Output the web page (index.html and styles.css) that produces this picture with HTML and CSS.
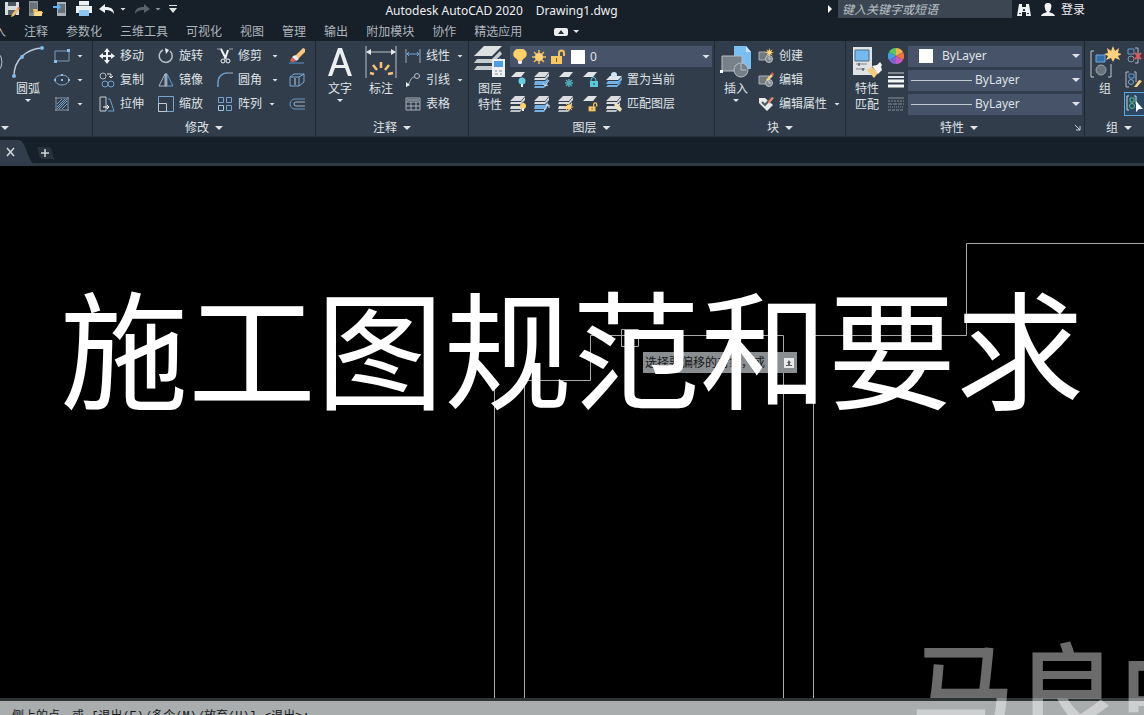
FILE: index.html
```html
<!DOCTYPE html>
<html lang="zh-CN">
<head>
<meta charset="utf-8">
<title>Autodesk AutoCAD 2020 - Drawing1.dwg</title>
<link rel="stylesheet" href="styles.css">
</head>
<body>
<svg class="defs" aria-hidden="true">
  <symbol id="stack" viewBox="0 0 16 16"><path d="M5 0h10l-4 5H0zM1 6h10l4-5v3l-4 4H0zM1 10h10l3-4v3l-3 4H0z" fill="#d9dddf"/><path d="M1 14h9l3-3v1l-3 4H0z" fill="#b9c0c4"/></symbol>
  <symbol id="stackblue" viewBox="0 0 16 16"><path d="M5 0h10l-4 5H0zM1 6h10l4-5v3l-4 4H0z" fill="#d9dddf"/><path d="M1 9h10l3-3v3l-3 4H0zM1 14h9l3-3v1l-3 4H0z" fill="#75afe0"/></symbol>
  <symbol id="bulb" viewBox="0 0 16 16"><path d="M8 0a5 5 0 0 0-3 10l1 2h4l1-2a5 5 0 0 0-3-10z" fill="#ffd166"/><path d="M6 12h4v2l-1 1H7l-1-1z" fill="#e8eaec"/></symbol>
  <symbol id="sun" viewBox="0 0 16 16"><g stroke="#f4bd55" stroke-width="1.5"><path d="M8 1v14M1 8h14M3 3l10 10M13 3L3 13"/></g><circle cx="8" cy="8" r="4" fill="#ffd477"/></symbol>
  <symbol id="unlock" viewBox="0 0 16 16"><path d="M9 7V4a2.500 2.500 0 0 1 5 0v3" fill="none" stroke="#f4c15b" stroke-width="2"/><path d="M1 7h11v8H1z" fill="#f9c75f"/><path d="M6 9h1v4H6z" fill="#7a5a1e"/></symbol>
  <symbol id="block" viewBox="0 0 16 16"><path d="M1 4h10v8H1z" fill="#707880" stroke="#aab2b8"/><circle cx="11" cy="11" r="3.500" fill="#808890" stroke="#bcc3c8"/><path d="M11 9v2h2" stroke="#ccd" fill="none"/></symbol>
</svg>

<header class="titlebar">
  <nav class="quick" aria-label="快速访问">
    <button aria-label="保存"><svg class="i16" viewBox="0 0 16 16"><path d="M1 1h14v13H1z" fill="#d8dcde"/><path d="M4 1h8v4H4z" fill="#4a5560"/><path d="M4 9h8v5H4z" fill="#59636c"/><path d="M8 13l5-6 2 2-5 6-3 1z" fill="#efbd6c"/><path d="M13 7l2 2 1-2-1-1z" fill="#e56b55"/></svg></button>
    <button aria-label="打开"><svg class="i16" viewBox="0 0 16 16"><path d="M1 0h9v15H1z" fill="#858d93"/><path d="M2 2h7v10H2z" fill="#68727a"/><path d="M5 8h4l1 2h4v5H6z" fill="#f0bf61"/><path d="M7 11h8l-2 4H6z" fill="#ffd98a"/></svg></button>
    <button aria-label="导入"><svg class="i16" viewBox="0 0 16 16"><path d="M5 1h9v14H5z" fill="#aab1b7"/><path d="M6 3h7v9H6z" fill="#67727d"/><path d="M1 5h4V2l4 4-4 4V7H1z" fill="#62b4f0"/></svg></button>
    <button aria-label="打印"><svg class="i16" viewBox="0 0 16 16"><path d="M3 0h10v5H3zM0 5h16v7H0z" fill="#edf0f1"/><path d="M3 4h10v1H3z" fill="#7d858c"/><path d="M3 9h10v6H3z" fill="#8cc6f2"/></svg></button>
    <button aria-label="放弃" class="undo"><svg class="i16" viewBox="0 0 16 16"><path d="M0 8l6-5v3c5 0 9 1 9 7-2-3-4-4-9-4v3z" fill="#f0f2f3"/></svg><i class="caret"></i></button>
    <button aria-label="重做" class="redo"><svg class="i16" viewBox="0 0 16 16"><path d="M16 8l-6-5v3C5 6 1 7 1 13c2-3 4-4 9-4v3z" fill="#56616b"/></svg><i class="caret dim"></i></button>
    <button aria-label="自定义"><svg class="i8" viewBox="0 0 8 8"><path d="M0 0h8v1H0zM0 3h8L4 8z" fill="#dfe3e6"/></svg></button>
  </nav>
  <h1 class="apptitle"><span>Autodesk AutoCAD 2020</span><span>Drawing1.dwg</span></h1>
  <div class="account">
    <svg class="i8" viewBox="0 0 8 8"><path d="M2 0l4 4-4 4z" fill="#fff"/></svg>
    <input type="search" aria-label="搜索" placeholder="键入关键字或短语">
    <button aria-label="查找"><svg class="i16" viewBox="0 0 16 16"><path d="M3 2h3v3h4V2h3l2 12h-5v-4H6v4H1z" fill="#eef0f1"/><path d="M7 7h2v2H7zM3 11h2v1H3zM11 11h2v1h-2z" fill="#26323c"/></svg></button>
    <button class="login"><svg class="i16" viewBox="0 0 16 16"><path d="M8 1c-3 0-4 2-3 5 0 2 1 3 2 4-2 1-5 1-6 4h14c-1-3-4-3-6-4 1-1 2-2 2-4 1-3 0-5-3-5z" fill="#f0f2f3"/></svg>登录</button>
  </div>
</header>

<nav class="tabs" aria-label="功能区选项卡">
  <button class="cut">插入</button><button>注释</button><button>参数化</button><button>三维工具</button><button>可视化</button><button>视图</button><button>管理</button><button>输出</button><button>附加模块</button><button>协作</button><button>精选应用</button>
  <button class="minimize" aria-label="最小化功能区"><svg class="cam" viewBox="0 0 14 8"><rect width="14" height="8" rx="2" fill="#eceeef"/><path d="M7 2l3 4H4z" fill="#26323c"/></svg><i class="caret"></i></button>
</nav>

<main class="ribbon">
  <section class="panel draw">
    <div class="body">
      <button class="edge" aria-label="圆"><svg class="sliver" viewBox="0 0 4 32"><circle cx="-11" cy="18" r="13" fill="none" stroke="#b9c3cc"/></svg></button>
      <button class="big"><svg class="i32" viewBox="0 0 32 32"><path d="M2 30C2 14 14 3 30 2" fill="none" stroke="#b9c8d6" stroke-width="1.500"/><g fill="#7db8ea"><circle cx="2" cy="30" r="2"/><circle cx="10" cy="11" r="2"/><circle cx="30" cy="2" r="2"/></g></svg><span>圆弧</span><i class="caret"></i></button>
      <div class="col">
        <button aria-label="矩形"><svg class="i16" viewBox="0 0 16 16"><path d="M1 3h14v10H1z" fill="none" stroke="#7b9cbd"/><path d="M0 12h3v3H0zM13 1h3v3h-3z" fill="#8ebce4"/></svg><i class="caret"></i></button>
        <button aria-label="椭圆"><svg class="i16" viewBox="0 0 16 16"><ellipse cx="8" cy="8" rx="7" ry="5" fill="none" stroke="#86a9c8"/><path d="M7 7h2v2H7zM0 7h2v2H0zM14 7h2v2h-2zM7 2h2v2H7z" fill="#8ebce4"/></svg><i class="caret"></i></button>
        <button aria-label="图案填充"><svg class="i16" viewBox="0 0 16 16"><path d="M1 2h14M1 14h14M2 1v14M14 1v14" stroke="#8996a3"/><path d="M3 8l5-5M3 13L13 3M8 13l5-5M3 11l8-8M5 13l8-8" stroke="#72a2cc"/></svg><i class="caret"></i></button>
      </div>
    </div>
    <h2><i class="caret wide"></i></h2>
  </section>

  <section class="panel modify">
    <div class="body">
      <div class="col">
        <button><svg class="i16" viewBox="0 0 16 16"><path d="M8 0l3 4H9v3h3V5l4 3-4 3V9H9v3h2l-3 4-3-4h2V9H4v2L0 8l4-3v2h3V4H5z" fill="#f0f2f3"/></svg>移动</button>
        <button><svg class="i16" viewBox="0 0 16 16" fill="none"><circle cx="4" cy="4" r="3" stroke="#aeb8c0"/><path d="M8 2h4v3m-2-1l2 2 2-2" stroke="#e6e9eb"/><circle cx="6" cy="12" r="3" stroke="#6d9fc9"/><circle cx="12" cy="12" r="3" stroke="#6d9fc9"/></svg>复制</button>
        <button><svg class="i16" viewBox="0 0 16 16" fill="none"><path d="M1 1h6v14H1z" stroke="#c3cbd1"/><path d="M9 3h2l4 12H9" stroke="#6d9fc9"/><path d="M4 11h6m-2-2l2 2-2 2" stroke="#fff"/></svg>拉伸</button>
      </div>
      <div class="col">
        <button><svg class="i16" viewBox="0 0 16 16"><path d="M5 2a6.500 6.500 0 1 0 7 1" fill="none" stroke="#b8c1c8" stroke-width="1.500"/><path d="M7 0l4 2-3 4z" fill="#eef0f1"/></svg>旋转</button>
        <button><svg class="i16" viewBox="0 0 16 16" fill="none"><path d="M7 2v12H1z" stroke="#a9b7c3"/><path d="M9 2v12h6z" stroke="#62a0d6"/><path d="M8 1v14" stroke="#d8dde0"/></svg>镜像</button>
        <button><svg class="i16" viewBox="0 0 16 16" fill="none"><path d="M.5.5h15v15H.5z" stroke="#77a5cd"/><path d="M.5 7.500h8v8h-8z" stroke="#c1c9cf"/></svg>缩放</button>
      </div>
      <div class="col third">
        <button><svg class="i16" viewBox="0 0 16 16" fill="none"><path d="M0 1h5M12 1h4" stroke="#9aa5ae"/><path d="M4 1l5 10M11 2L8 11" stroke="#f2f4f5" stroke-width="2"/><circle cx="6" cy="13" r="2" stroke="#f2f4f5"/><circle cx="11" cy="13" r="2" stroke="#f2f4f5"/></svg>修剪<i class="caret"></i></button>
        <button><svg class="i16" viewBox="0 0 16 16" fill="none"><path d="M1 15V10C1 5 5 1 10 1" stroke="#6b9fcb" stroke-width="1.500"/><path d="M10 1h6" stroke="#a8b2ba"/></svg>圆角<i class="caret"></i></button>
        <button class="near"><svg class="i16" viewBox="0 0 16 16" fill="none"><path d="M1.500 1.500h5v5h-5zM9.500 1.500h5v5h-5zM9.500 9.500h5v5h-5z" stroke="#71a5d2"/><path d="M1.500 9.500h5v5h-5z" stroke="#a9c6df"/></svg>阵列<i class="caret"></i></button>
      </div>
      <div class="col">
        <button aria-label="删除"><svg class="i16" viewBox="0 0 16 16"><path d="M0 15h15" stroke="#5699d1"/><path d="M6 8l8-8 2 1v3l-7 7z" fill="#fac77b"/><path d="M6 7l4 4-3 2-4-4z" fill="#eef1f3"/><path d="M3 9l4 4-3 1-3-1z" fill="#e8604f"/></svg></button>
        <button aria-label="分解"><svg class="i16" viewBox="0 0 16 16" fill="none" stroke="#79aad3"><path d="M1 5h9v9H1zM1 5l4-3h10v8l-5 4M10 5l5-3"/><path d="M6 6v7" stroke="#c0d4e4"/></svg></button>
        <button aria-label="偏移"><svg class="i16" viewBox="0 0 16 16" fill="none"><path d="M16 3H6a5 5 0 0 0 0 10h10" stroke="#6797c2"/><path d="M16 6H7a2 2 0 0 0 0 4h9" stroke="#a4b4c2"/></svg></button>
      </div>
    </div>
    <h2>修改<i class="caret wide"></i></h2>
  </section>

  <section class="panel annotate">
    <div class="body">
      <button class="big"><svg class="i32" viewBox="0 0 32 32"><path d="M4 30L14 2h4l10 28h-4l-3-8H11l-3 8zM12 19h8L16 7z" fill="#eceff0"/></svg><span>文字</span><i class="caret"></i></button>
      <button class="big"><svg class="i32" viewBox="0 0 32 32"><path d="M1 0v32M31 0v32M2 6h28" stroke="#b8c2ca"/><path d="M1 6l5-3v6zM31 6l-5-3v6z" fill="#e6eaec"/><g stroke="#f6c473" stroke-width="2.500"><path d="M5 27l4 1M8 19l4 5M16 16v6M24 19l-4 5M28 27l-5 1"/></g></svg><span>标注</span></button>
      <div class="col">
        <button><svg class="i16" viewBox="0 0 16 16" fill="none"><path d="M1 1v14M15 1v14" stroke="#9da9b3"/><path d="M2 6h12M4 4L2 6l2 2M12 4l2 2-2 2" stroke="#6aa9df"/></svg>线性<i class="caret"></i></button>
        <button><svg class="i16" viewBox="0 0 16 16" fill="none"><circle cx="12" cy="4" r="2.500" stroke="#b3bec7"/><path d="M10 5c-4 0-4 3-7 8" stroke="#b3bec7"/><path d="M1 15V10l4 3z" fill="#eef1f2"/></svg>引线<i class="caret"></i></button>
        <button><svg class="i16" viewBox="0 0 16 16" fill="none"><path d="M1 2h14v12H1zM1 6h14M1 10h14M6 6v8M11 6v8" stroke="#a5b0b9"/><path d="M2 4h12" stroke="#78838d" stroke-width="2"/></svg>表格</button>
      </div>
    </div>
    <h2>注释<i class="caret wide"></i></h2>
  </section>

  <section class="panel layers">
    <div class="body">
      <button class="big"><svg class="i32" viewBox="0 0 32 32"><path d="M10 0h18L18 10H0z" fill="#dde1e2"/><path d="M3 13h15l8-8 2 3-9 9H0zM3 20h15l8-8 2 3-9 9H0z" fill="#c6cccf"/><path d="M18 13h13v18H18z" fill="#eef1f2"/><path d="M20 15h9v6h-9z" fill="#4b9fe5"/><path d="M21 25h2m2 0h3m-7 3h3m2 0h2" stroke="#798795"/></svg><span>图层</span><span>特性</span></button>
      <div class="layerarea">
        <div class="combo"><svg class="i16"><use href="#bulb"/></svg><svg class="i16"><use href="#sun"/></svg><svg class="i16"><use href="#unlock"/></svg><i class="swatch"></i><select aria-label="图层"><option>0</option></select><i class="caret wide"></i></div>
        <div class="tools">
          <button aria-label="关闭图层"><svg class="i16" viewBox="0 0 16 16"><path d="M6 0h9l-4 5H1z" fill="#dfe3e5"/><circle cx="12" cy="9" r="3.500" fill="#63d2de"/><path d="M11 12h2v3h-2z" fill="#dff"/></svg></button>
          <button aria-label="隔离图层"><svg class="i16" viewBox="0 0 16 16"><use href="#stackblue"/><path d="M15 8l-4 6M9 11l2 3 3-1" stroke="#b9dcf7" fill="none"/></svg></button>
          <button aria-label="冻结图层"><svg class="i16" viewBox="0 0 16 16"><path d="M6 0h9l-4 5H1z" fill="#dfe3e5"/><path d="M11 7v8M7 11h8M8 8l6 6M14 8l-6 6" stroke="#50a9b8" stroke-width="1.500"/></svg></button>
          <button aria-label="锁定图层"><svg class="i16" viewBox="0 0 16 16"><path d="M6 0h9l-4 5H1z" fill="#dfe3e5"/><path d="M9 10V8a2 2 0 0 1 5 0v2" stroke="#5acbdc" fill="none"/><path d="M8 9h8v6H8z" fill="#5acbdc"/><path d="M12 11v2" stroke="#245"/></svg></button>
          <button class="wordy"><svg class="i16" viewBox="0 0 16 16"><path d="M4 4h12l-4 4H0z" fill="#e1e5e7"/><path d="M2 9h10l4-4v3l-4 4H0zM2 13h9l4-3v1l-4 4H0z" fill="#72b2e8"/><circle cx="8" cy="3" r="3" fill="#cde5f8"/></svg>置为当前</button>
          <button aria-label="打开所有图层"><svg class="i16" viewBox="0 0 16 16"><use href="#stack"/><circle cx="13" cy="10" r="3" fill="#ffd166"/><path d="M12 12h2v3h-2z" fill="#fff"/></svg></button>
          <button aria-label="取消隔离"><svg class="i16" viewBox="0 0 16 16"><use href="#stackblue"/><path d="M10 14l4-5M12 9h3v3" stroke="#d8eafa" fill="none"/></svg></button>
          <button aria-label="解冻图层"><svg class="i16" viewBox="0 0 16 16"><use href="#stack"/><svg x="6" y="6" width="10" height="10"><use href="#sun"/></svg></svg></button>
          <button aria-label="解锁图层"><svg class="i16" viewBox="0 0 16 16"><path d="M6 0h9l-4 5H1z" fill="#dfe3e5"/><svg x="6" y="6" width="10" height="10"><use href="#unlock"/></svg></svg></button>
          <button class="wordy"><svg class="i16" viewBox="0 0 16 16"><use href="#stack"/><path d="M8 7l4 1 4 5-2 3-5-5z" fill="#f1dfba"/></svg>匹配图层</button>
        </div>
      </div>
    </div>
    <h2>图层<i class="caret wide"></i></h2>
  </section>

  <section class="panel blocks">
    <div class="body">
      <button class="big"><svg class="i32" viewBox="0 0 32 32"><path d="M14 0h12l5 6v17H14z" fill="#79bff3"/><path d="M26 0v6h5z" fill="#c7e4fa"/><path d="M2 10h20v15H2z" fill="#78818a" stroke="#b6bec5"/><circle cx="21" cy="24" r="7" fill="#747e87" stroke="#b9c1c8"/><path d="M21 18v6h5" fill="none" stroke="#b9c1c8"/><path d="M0 24h3v3H0z" fill="#fff"/></svg><span>插入</span><i class="caret"></i></button>
      <div class="col">
        <button><svg class="i16" viewBox="0 0 16 16"><use href="#block"/><svg x="7" y="0" width="9" height="9"><use href="#sun"/></svg></svg>创建</button>
        <button><svg class="i16" viewBox="0 0 16 16"><use href="#block"/><path d="M8 8l5-6 2 2-5 5z" fill="#ffd080"/><path d="M13 2l1-2 2 2-1 2z" fill="#e85d4e"/></svg>编辑</button>
        <button><svg class="i16" viewBox="0 0 16 16"><path d="M1 2h6l8 7-6 6-8-8z" fill="#e8ebec"/><path d="M4 6l3 3 6-7" stroke="#4c5861" stroke-width="2" fill="none"/><path d="M10 6l4-5 2 1-5 6z" fill="#ef8a66"/></svg>编辑属性<i class="caret"></i></button>
      </div>
    </div>
    <h2>块<i class="caret wide"></i></h2>
  </section>

  <section class="panel props">
    <div class="body">
      <button class="big"><svg class="i32" viewBox="0 0 32 32"><path d="M2 1h19v28H2z" fill="#dfe3e5"/><path d="M4 4h14v11H4z" fill="#75b9f0" stroke="#4d6a82"/><path d="M5 18h11M5 23h9" stroke="#7a848d"/><path d="M8 17v3M12 22v3" stroke="#333"/><path d="M16 24l5-3 6 6-4 5z" fill="#f5cb7c"/><path d="M21 20l5-1 3-3 2 3-1 2 1 3-4 4z" fill="#f4f5f5"/></svg><span>特性</span><span>匹配</span></button>
      <div class="propgrid">
        <svg class="i16" viewBox="0 0 16 16"><path d="M8 8V0a8 8 0 0 1 7 4z" fill="#f7b04c"/><path d="M8 8l7-4a8 8 0 0 1 0 8z" fill="#f37040"/><path d="M8 8l7 4a8 8 0 0 1-7 4z" fill="#cd58c2"/><path d="M8 8v8a8 8 0 0 1-7-4z" fill="#7a64d6"/><path d="M8 8l-7 4a8 8 0 0 1 0-8z" fill="#3e9fe2"/><path d="M8 8L1 4a8 8 0 0 1 7-4z" fill="#56c765"/></svg>
        <div class="combo color"><i class="swatch"></i><select aria-label="对象颜色"><option>ByLayer</option></select><i class="caret wide"></i></div>
        <svg class="i16" viewBox="0 0 16 16"><path d="M0 1h16" stroke="#c8ced2"/><path d="M0 5h16" stroke="#e8ebec" stroke-width="2"/><path d="M0 9h16M0 14h16" stroke="#f4f5f5" stroke-width="3"/></svg>
        <div class="combo line"><i class="rule"></i><select aria-label="线宽"><option>ByLayer</option></select><i class="caret wide"></i></div>
        <svg class="i16" viewBox="0 0 16 16" stroke="#8a949d"><path d="M0 2h16"/><path d="M0 5h16" stroke-dasharray="2 1"/><path d="M0 8h16" stroke-dasharray="4 1"/><path d="M0 11h16" stroke-dasharray="1 1"/><path d="M0 14h16" stroke-dasharray="3 1"/></svg>
        <div class="combo line"><i class="rule"></i><select aria-label="线型"><option>ByLayer</option></select><i class="caret wide"></i></div>
      </div>
    </div>
    <h2>特性<i class="caret wide"></i><svg class="launch" viewBox="0 0 8 8"><path d="M1 1l5 5M6 2v4H2" stroke="#cdd4d9" fill="none"/></svg></h2>
  </section>

  <section class="panel groups">
    <div class="body">
      <button class="big"><svg class="i32" viewBox="0 0 32 32"><path d="M5 5H2v26h3M19 31h3V18" fill="none" stroke="#c0c8ce"/><path d="M7 9h9v7H7z" fill="#326fa9" stroke="#6ea9dd"/><circle cx="12" cy="24" r="5" fill="#68727b" stroke="#9ba5ad"/><path d="M24 0l2 5 4-3-1 5 4 1-4 2 2 4-5-2-2 4-2-4-5 2 2-4-4-2 4-1-1-5 4 3z" fill="#ffcf7b"/></svg><span>组</span></button>
      <div class="col">
        <button aria-label="解除编组"><svg class="i20" viewBox="0 0 20 20"><path d="M4 3h6v5H4z" fill="none" stroke="#6d9fd0"/><circle cx="7" cy="13" r="3" fill="none" stroke="#8d98a2"/><path d="M11 2h3v15h-3" fill="none" stroke="#b4bdc4"/><path d="M11 7l6 6M17 7l-6 6" stroke="#ed5555" stroke-width="2"/></svg></button>
        <button aria-label="组编辑"><svg class="i20" viewBox="0 0 20 20"><path d="M5 2H2v15h3M10 2h2v10" fill="none" stroke="#b4bdc4"/><path d="M5 4h5v4H5z" fill="none" stroke="#5f9fe0"/><circle cx="7" cy="12" r="2.500" fill="none" stroke="#6fa8d8"/><path d="M10 17l5-7 3 1-5 6z" fill="#ffd080"/></svg></button>
        <button aria-label="组选择" class="on"><svg class="i20" viewBox="0 0 20 20"><path d="M5 2H3v14h2M10 2h2v8" fill="none" stroke="#cfd6db"/><path d="M6 4h4v4H6z" fill="none" stroke="#58c58a"/><circle cx="8" cy="12" r="2.500" fill="none" stroke="#58c58a"/><path d="M12 7v11l3-3h4z" fill="#fff"/></svg></button>
      </div>
    </div>
    <h2>组<i class="caret wide"></i></h2>
  </section>
</main>

<nav class="files" aria-label="文件选项卡">
  <button class="filetab" aria-label="关闭"><svg class="tabshape" viewBox="0 0 36 26"><path d="M0 0h18c9 0 8 20 18 26H0z" fill="#323d4c"/><path d="M7 8l7 8M14 8l-7 8" stroke="#d2d7db" stroke-width="1.500"/></svg></button>
  <button class="newtab" aria-label="新图形"><svg class="plus" viewBox="0 0 20 16"><path d="M2 2h12c4 0 3 10 6 12H8C3 14 4 6 2 2z" fill="#27323d"/><path d="M10 4v8M6 8h8" stroke="#cfd4d8" stroke-width="1.500"/></svg></button>
</nav>

<div class="canvas">
  <svg class="drawing" width="1144" height="533" viewBox="0 0 1144 533" fill="none" stroke="#a9a9a9"><path d="M494.500 219V533M524.500 533V214.500H590.500V169.500H783.500V533M813.500 533V169.500H966.500V77.500H1144M621.500 163.500h17v17h-17z" stroke-width="1"/></svg>
  <div class="prompt"><span>选择要偏移的对象，或</span><svg class="key" viewBox="0 0 10 10"><path d="M0 0h10v10H0z" fill="#e9ebeb"/><path d="M5 2l2 3H6v2h2v1H2V7h2V5H3z" fill="#5b6064"/></svg></div>
  <p class="headline">施工图规范和要求</p>
</div>
<footer class="command">侧上的点，或 [退出(E)/多个(M)/放弃(U)] &lt;退出&gt;:</footer>
<div class="watermark">马良中</div>
</body>
</html>
```
FILE: styles.css
```css
* { box-sizing: border-box; }
body {
  margin: 0;
  height: 100vh;
  display: flex;
  flex-direction: column;
  position: relative;
  overflow: hidden;
  background: #000;
  color: #dfe3e6;
  font: 12px/16px "Noto Sans", "Noto Sans CJK SC", sans-serif;
}
button, input, select { font: inherit; color: inherit; border: 0; background: none; padding: 0; margin: 0; }
button { display: flex; align-items: center; white-space: nowrap; }
svg { display: block; flex: none; }
.defs { position: absolute; width: 0; height: 0; }
.i8 { width: 8px; height: 8px; }
.i16 { width: 16px; height: 16px; }
.i20 { width: 20px; height: 20px; }
.i32 { width: 32px; height: 32px; }
.caret { flex: none; width: 6px; height: 3px; background: #dfe3e6; clip-path: polygon(0 0, 100% 0, 50% 100%); }
.caret.wide { width: 8px; height: 4px; }
.caret.dim { background: #8a939b; }

.titlebar { flex: none; height: 20px; display: flex; align-items: center; justify-content: space-between; background: #172029; padding: 0 59px 0 4px; }
.quick { display: flex; align-items: center; gap: 8px; margin-top: -2px; }
.quick .undo, .quick .redo { gap: 5px; }
.quick .undo { margin-left: -1px; }
.apptitle { margin: 0; padding-top: 2px; font: inherit; color: #eef0f1; display: flex; gap: 13px; }
.account { display: flex; align-items: center; gap: 4px; height: 18px; margin-top: -2px; }
.account input { width: 174px; height: 18px; padding: 0 4px; background: #3b4652; font-style: italic; }
.account input::placeholder { color: #bcc3c9; opacity: 1; }
.account button { padding-top: 2px; }
.account .login { gap: 5px; color: #eef0f1; margin-left: 4px; }

.tabs { flex: none; height: 21px; padding-top: 2px; display: flex; align-items: center; gap: 18px; background: #172029; color: #aeb5bb; }
.tabs .cut { margin-left: -18px; }
.tabs .minimize { gap: 5px; margin-left: 14px; }
.cam { width: 14px; height: 8px; }

.ribbon { flex: none; display: flex; background: #323d4c; border-bottom: 1px solid #27313d; }
.panel { flex: none; display: flex; flex-direction: column; border-right: 1px solid #1d2731; }
.panel:last-child { flex: 1; min-width: 0; border-right: 0; overflow: hidden; }
.body { display: flex; padding-top: 3px; }
.panel h2 { margin: 0; padding-top: 4px; height: 20px; font: inherit; display: flex; align-items: center; justify-content: center; gap: 6px; position: relative; }
.big { flex-direction: column; justify-content: flex-start; padding-top: 2px; width: 34px; height: 72px; line-height: 16px; }
.big .i32 { margin-bottom: 3px; }
.big .caret { margin-top: 2px; }
.col { display: grid; grid-auto-rows: 24px; }
.col button { gap: 5px; }

.draw { width: 93px; }
.draw .body { gap: 9px; }
.sliver { width: 4px; height: 32px; }
.edge { width: 2px; align-items: flex-start; }
.draw .col button { gap: 7px; }
.draw h2 { justify-content: flex-start; padding-left: 1px; }

.modify { width: 223px; }
.modify .body { padding-left: 6px; gap: 14px; }
.modify .col.third { width: 58px; }
.modify .col.third .caret { margin-left: 5px; }
.modify .col.third .near .caret { margin-left: 2px; }

.annotate { width: 153px; }
.annotate .body { padding-left: 7px; gap: 7px; }
.annotate .col .caret { margin-left: 2px; }

.layers { width: 246px; }
.layers .body { padding-left: 4px; gap: 3px; }
.layerarea { width: 202px; padding-top: 2px; }
.tools { display: grid; grid-template-columns: repeat(4, 24px) auto; grid-auto-rows: 24px; padding-top: 1px; }
.wordy { gap: 5px; }

.combo { display: flex; align-items: center; background: #465369; height: 21px; padding: 0 2px 0 4px; min-width: 0; }
.combo select { flex: 1; min-width: 0; appearance: none; -webkit-appearance: none; height: 21px; }
.swatch { flex: none; width: 14px; height: 14px; background: #fff; }
.layers .combo { gap: 3px; padding-left: 2px; }
.layers .combo .swatch { margin: 0 2px; }

.blocks { width: 131px; }
.blocks .body { padding-left: 4px; gap: 5px; }
.blocks .col .caret { margin-left: 2px; }

.props { width: 239px; }
.props .body { padding-left: 4px; gap: 4px; }
.props h2 { padding-right: 12px; }
.propgrid { flex: 1; display: grid; grid-template-columns: 16px 1fr; grid-auto-rows: 24px; column-gap: 4px; align-items: center; padding-right: 2px; }
.combo.color { padding-left: 11px; gap: 9px; }
.combo.line { gap: 3px; padding-left: 3px; }
.rule { width: 61px; height: 1px; background: #c3cad1; flex: none; }
.launch { position: absolute; right: 2px; top: 8px; width: 8px; height: 8px; }

.groups .body { padding-left: 4px; gap: 3px; }
.groups h2 { justify-content: flex-start; padding-left: 21px; }
.groups .on { background: #2b4964; outline: 1px solid #5fa5dd; outline-offset: -1px; width: 24px; }

.files { flex: none; height: 29px; display: flex; align-items: flex-start; padding-top: 3px; background: #15202a; border-bottom: 3px solid #303a47; }
.tabshape { width: 36px; height: 26px; }
.plus { width: 20px; height: 16px; }
.newtab { margin-top: 5px; }
.filetab { margin-right: -1px; }

.canvas { flex: 1; min-height: 0; position: relative; overflow: hidden; background: #000; }
.drawing { position: absolute; left: 0; top: 0; }
.prompt { position: absolute; left: 643px; top: 186px; width: 154px; height: 21px; display: flex; align-items: center; justify-content: space-between; padding: 0 3px 0 2px; background: #8b8e90; color: #16191b; }
.key { width: 10px; height: 10px; }
.headline { position: absolute; left: 0; right: 0; top: 84px; margin: 0; text-align: center; font: 128px/190px "Noto Sans CJK SC", sans-serif; color: #fff; white-space: nowrap; }

.command { flex: none; height: 17px; overflow: hidden; padding: 8px 12px 0; border-top: 3px solid #2c3334; background: #a9adae; color: #15191b; white-space: nowrap; font-family: "Liberation Mono", "Noto Sans CJK SC", monospace; }
.watermark { position: absolute; left: 911px; top: 611px; font: 500 104px/150px "Noto Sans CJK SC", sans-serif; color: rgba(255, 255, 255, 0.42); white-space: nowrap; }
```
